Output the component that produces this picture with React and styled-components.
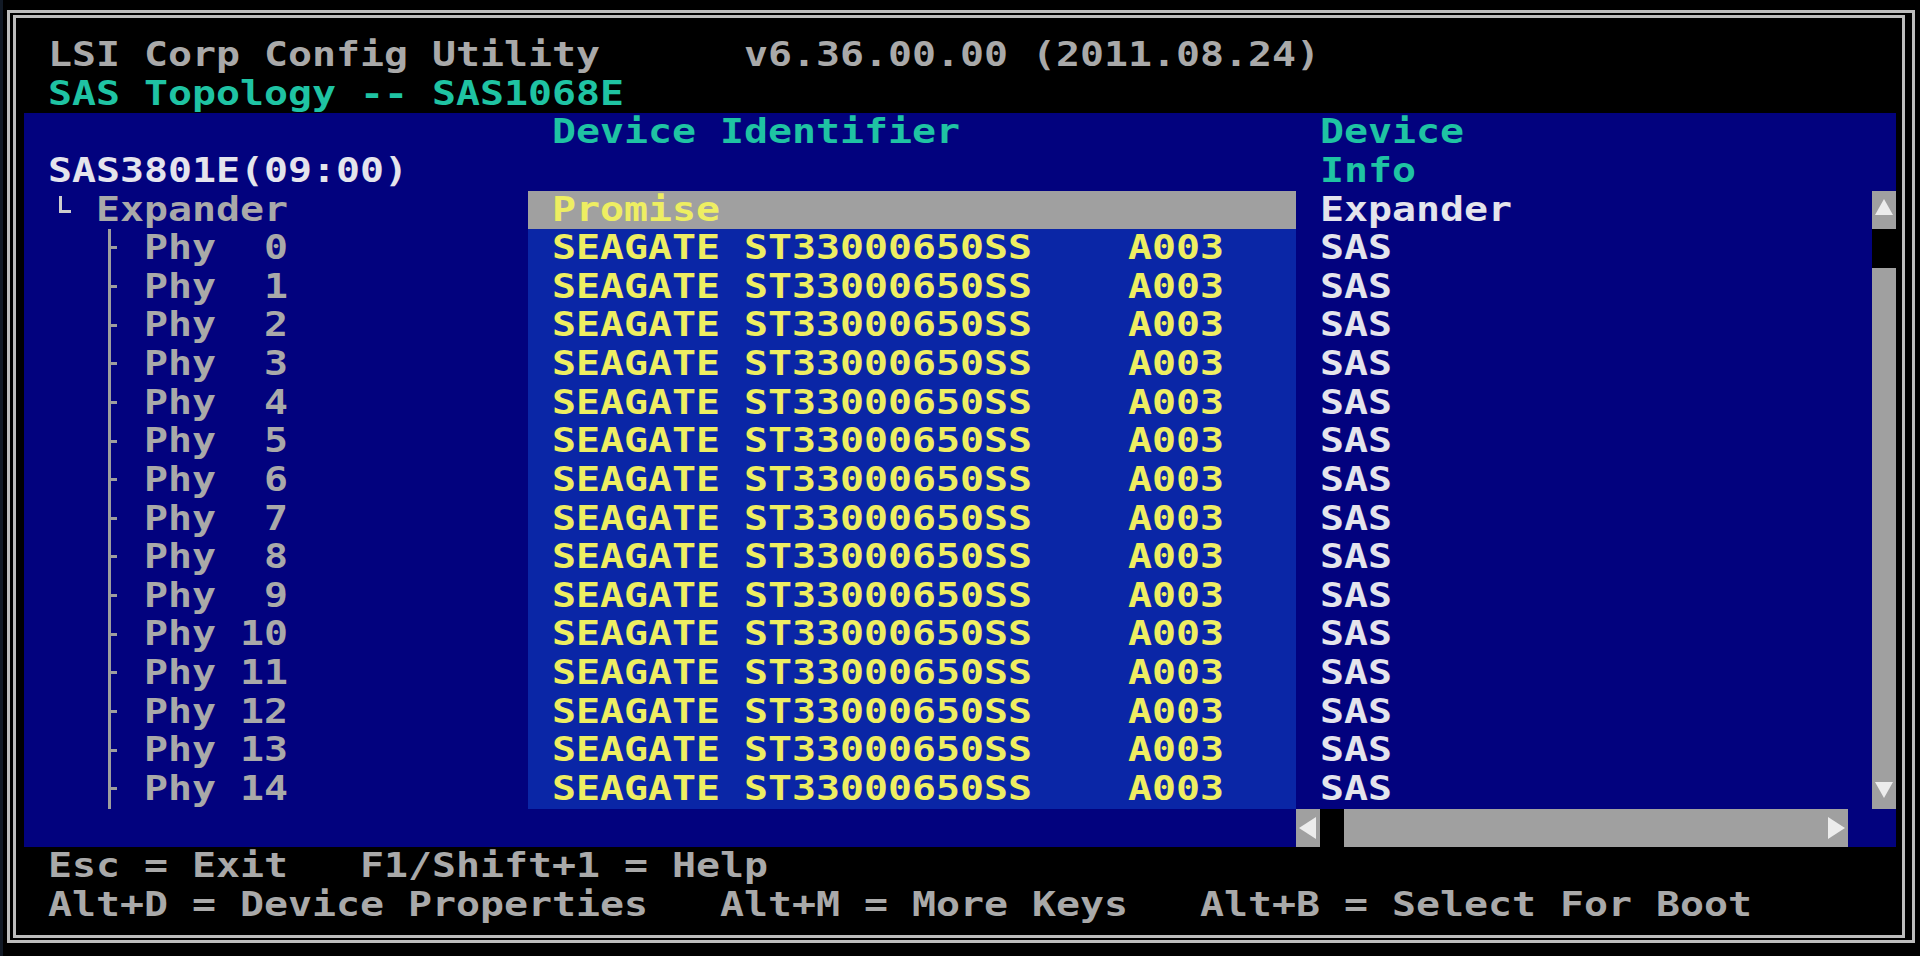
import React from "react";
import styled, { createGlobalStyle } from "styled-components";

// Text-mode grid: 80 columns of 24px, rows of 38.63px.
const ROW = 38.63;
const CELL = 24;

const GREY = "#a9a9a9";
const TEAL = "#1fc3a3";
const YELLOW = "#eeee62";
const WHITE = "#e4e4ec";
const PANEL = "#02027e";
const LIST = "#0a26a6";
const BAR = "#a0a0a0";
const LINE = "#bdbdbd";

const GlobalStyle = createGlobalStyle`
  html, body {
    margin: 0;
    padding: 0;
    background: #000;
  }
  body {
    width: 1920px;
    height: 956px;
    overflow: hidden;
  }
`;

const Screen = styled.main`
  box-sizing: border-box;
  width: 1920px;
  height: 956px;
  padding: 10px 5px 13px 7px;
  background: #000;
  box-shadow: inset 3px 0 0 #121a26;
  font-family: "DejaVu Sans Mono", "Liberation Mono", monospace;
  font-size: 34px;
  font-weight: 700;
  overflow: hidden;
`;

const OuterFrame = styled.div`
  box-sizing: border-box;
  height: 100%;
  border: 3px solid ${LINE};
  padding: 2px 7px 2px 3px;
`;

const InnerFrame = styled.div`
  box-sizing: border-box;
  height: 100%;
  border: 3px solid ${LINE};
  padding: 18px 6px 0 8px;
  display: flex;
  flex-direction: column;
`;

const Line = styled.div`
  display: grid;
  grid-template-columns: repeat(${(p) => p.$cols}, ${CELL}px);
  grid-template-rows: ${ROW}px;
  height: ${ROW}px;
  background: ${(p) => p.$bg || "transparent"};
`;

const Text = styled.span`
  grid-row: 1;
  grid-column: ${(p) => p.$col} / span 1;
  color: ${(p) => p.$color};
  white-space: pre;
  line-height: 37px;
  transform: scaleX(1.1725);
  transform-origin: 0 0;
`;

const Panel = styled.section`
  display: grid;
  grid-template-columns: ${21 * CELL}px ${32 * CELL}px ${25 * CELL}px;
  height: ${19 * ROW}px;
  background: ${PANEL};
`;

const Column = styled.div`
  display: flex;
  flex-direction: column;
`;

const DeviceList = styled.div`
  display: flex;
  flex-direction: column;
  background: ${LIST};
`;

const Corner = styled.span`
  grid-row: 1;
  grid-column: 2;
  align-self: start;
  box-sizing: border-box;
  width: 12px;
  height: 17px;
  margin: 5px 0 0 11px;
  border-left: 3px solid #cdcdcd;
  border-bottom: 3px solid #cdcdcd;
`;

const Branch = styled.span`
  grid-row: 1;
  grid-column: 4;
  display: flex;
  align-items: center;
  margin-left: 12px;
  border-left: 3px solid #9e9e9e;

  &::after {
    content: "";
    width: 6px;
    height: 3px;
    margin-top: -1px;
    background: #9e9e9e;
  }
`;

const InfoBody = styled.div`
  display: grid;
  grid-template-columns: ${24 * CELL}px ${CELL}px;
`;

const VScroll = styled.div`
  display: flex;
  flex-direction: column;
`;

const ArrowCell = styled.span`
  display: block;
  width: ${CELL}px;
  height: ${ROW}px;
  background: ${BAR};
  flex: none;
`;

const Thumb = styled.span`
  display: block;
  width: ${CELL}px;
  height: ${ROW}px;
  background: #000;
  flex: none;
`;

const Track = styled.span`
  display: flex;
  justify-content: flex-end;
  flex: 1;
  background: ${BAR};
`;

const HScroll = styled.div`
  display: flex;
  width: ${23 * CELL}px;
  height: ${ROW}px;
`;

const Footer = styled.footer`
  display: flex;
  flex-direction: column;
`;

const arrowShapes = {
  up: "3,24 21,24 12,8",
  down: "3,12 21,12 12,28",
  left: "3,19 20,8 20,30",
  right: "4,8 4,30 21,19",
};

function Arrow({ dir }) {
  return (
    <svg width={CELL} height={ROW} viewBox={`0 0 ${CELL} ${ROW}`} style={{ display: "block" }}>
      <polygon points={arrowShapes[dir]} fill="#ececec" />
    </svg>
  );
}

const phys = Array.from({ length: 15 }, (_, i) => i);

export default function App() {
  return (
    <>
      <GlobalStyle />
      <Screen>
        <OuterFrame>
          <InnerFrame>
            <header>
              <Line $cols={78}>
                <Text $col={2} $color={GREY}>LSI Corp Config Utility</Text>
                <Text $col={31} $color={GREY}>v6.36.00.00 (2011.08.24)</Text>
              </Line>
              <Line $cols={78}>
                <Text $col={2} $color={TEAL}>SAS Topology -- SAS1068E</Text>
              </Line>
            </header>

            <Panel>
              {/* topology tree */}
              <Column>
                <Line $cols={21} />
                <Line $cols={21}>
                  <Text $col={2} $color={WHITE}>SAS3801E(09:00)</Text>
                </Line>
                <Line $cols={21}>
                  <Corner />
                  <Text $col={4} $color={GREY}>Expander</Text>
                </Line>
                {phys.map((n) => (
                  <Line $cols={21} key={n}>
                    <Branch />
                    <Text $col={6} $color={GREY}>{`Phy ${String(n).padStart(2, " ")}`}</Text>
                  </Line>
                ))}
              </Column>

              {/* device identifiers */}
              <Column>
                <Line $cols={32}>
                  <Text $col={2} $color={TEAL}>Device Identifier</Text>
                </Line>
                <Line $cols={32} />
                <Line $cols={32} $bg={BAR}>
                  <Text $col={2} $color={YELLOW}>Promise</Text>
                </Line>
                <DeviceList>
                  {phys.map((n) => (
                    <Line $cols={32} key={n}>
                      <Text $col={2} $color={YELLOW}>SEAGATE ST33000650SS</Text>
                      <Text $col={26} $color={YELLOW}>A003</Text>
                    </Line>
                  ))}
                </DeviceList>
                <Line $cols={32} />
              </Column>

              {/* device info with scroll bars */}
              <Column>
                <Line $cols={25}>
                  <Text $col={2} $color={TEAL}>Device</Text>
                </Line>
                <Line $cols={25}>
                  <Text $col={2} $color={TEAL}>Info</Text>
                </Line>
                <InfoBody>
                  <Column>
                    <Line $cols={24}>
                      <Text $col={2} $color={WHITE}>Expander</Text>
                    </Line>
                    {phys.map((n) => (
                      <Line $cols={24} key={n}>
                        <Text $col={2} $color={WHITE}>SAS</Text>
                      </Line>
                    ))}
                  </Column>
                  <VScroll>
                    <ArrowCell>
                      <Arrow dir="up" />
                    </ArrowCell>
                    <Thumb />
                    <Track />
                    <ArrowCell>
                      <Arrow dir="down" />
                    </ArrowCell>
                  </VScroll>
                </InfoBody>
                <HScroll>
                  <ArrowCell>
                    <Arrow dir="left" />
                  </ArrowCell>
                  <Thumb />
                  <Track>
                    <Arrow dir="right" />
                  </Track>
                </HScroll>
              </Column>
            </Panel>

            <Footer>
              <Line $cols={78}>
                <Text $col={2} $color={GREY}>Esc = Exit   F1/Shift+1 = Help</Text>
              </Line>
              <Line $cols={78}>
                <Text $col={2} $color={GREY}>
                  Alt+D = Device Properties   Alt+M = More Keys   Alt+B = Select For Boot
                </Text>
              </Line>
            </Footer>
          </InnerFrame>
        </OuterFrame>
      </Screen>
    </>
  );
}
